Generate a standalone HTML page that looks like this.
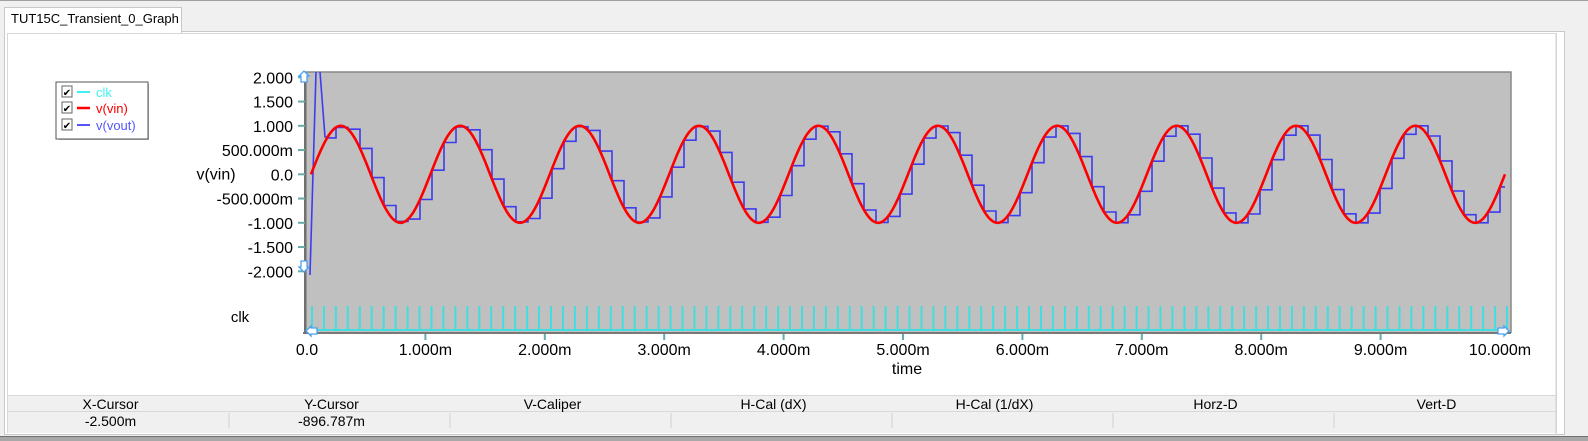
<!DOCTYPE html>
<html><head><meta charset="utf-8"><style>
html,body{margin:0;padding:0;width:1588px;height:441px;overflow:hidden;}
body{background:#f0f0f0;font-family:"Liberation Sans",sans-serif;}
#root{position:relative;width:1588px;height:441px;overflow:hidden;}
.t{position:absolute;font-size:13px;color:#000;}
svg{display:block}
</style></head><body><div id="root">
<div style="position:absolute;left:0;top:0;width:1588px;height:1px;background:#a0a0a0"></div>
<div style="position:absolute;left:4px;top:7px;width:176px;height:25px;background:#fff;border:1px solid #c8c8c8;border-bottom:none;z-index:2"></div>
<div class="t" style="left:11px;top:11px;font-size:13px;z-index:3">TUT15C_Transient_0_Graph</div>
<div style="position:absolute;left:4px;top:31px;width:1559px;height:402px;background:#fff;border:1px solid #c8c8c8;"></div>
<div style="position:absolute;left:7px;top:33px;width:1548px;height:398px;border:1px solid #d8d8d8;background:#fff"></div>
<div style="position:absolute;left:0;top:436px;width:1588px;height:5px;background:#a8a8a8"></div>
<div style="position:absolute;left:0;top:436px;width:1588px;height:1px;background:#707070"></div>
<div style="position:absolute;left:8px;top:395px;width:1548px;height:37px;background:#f0f0f0;border-top:1px solid #d8d8d8"></div>
<div style="position:absolute;left:8px;top:411px;width:1548px;height:1px;background:#d8d8d8"></div>
<svg width="1588" height="441" style="position:absolute;left:0;top:0" id="s">
</svg>
</div>
<script>
const NS="http://www.w3.org/2000/svg";const s=document.getElementById('s');
function el(t,a){const e=document.createElementNS(NS,t);for(const k in a)e.setAttribute(k,a[k]);s.appendChild(e);return e;}
function tx(x,y,str,anchor,fill,size){const e=el('text',{x:x,y:y,'text-anchor':anchor||'start',fill:fill||'#000','font-size':size||14,'font-family':'Liberation Sans, sans-serif'});e.textContent=str;}
el('rect',{x:306,y:72,width:1205,height:261,fill:'#c0c0c0'});
el('path',{d:'M306 333V72H1511V333',stroke:'#888',fill:'none','stroke-width':1.5});
el('path',{d:'M303 333H1511',stroke:'#777','stroke-width':2});
el('line',{x1:305,y1:72,x2:305,y2:334,stroke:'#707070','stroke-width':2});
const X0=311,PX=119.4,Y0=174.3,PY=48.5;
const X=t=>X0+t*PX, Y=v=>Y0-v*PY;
const yl=[[2,'2.000'],[1.5,'1.500'],[1,'1.000'],[0.5,'500.000m'],[0,'0.0'],[-0.5,'-500.000m'],[-1,'-1.000'],[-1.5,'-1.500'],[-2,'-2.000']];
yl.forEach(([v,l])=>{tx(293,Y(v)+6,l,'end','#000',16);el('line',{x1:298,y1:Y(v),x2:305,y2:Y(v),stroke:'#6aa','stroke-width':2});});
tx(216,Y(0)+5,'v(vin)','middle','#000',16);
tx(240,322,'clk','middle','#000',15);
for(let i=0;i<=10;i++){const l=i==0?'0.0':i+'.000m';tx(i==0?307:X(i)-5,355,l,'middle','#000',16);if(i>0&&i<10)el('line',{x1:X(i)-5,y1:334,x2:X(i)-5,y2:340,stroke:'#6aa','stroke-width':2});}
tx(907,374,'time','middle','#000',16);
let cp='M306 330H1506';for(let x=312;x<1508;x+=11.95)cp+=`M${x.toFixed(1)} 330V306`;
el('path',{d:cp,stroke:'#44dcdc','stroke-width':2,fill:'none'});
let d=`M310 275L316 72M320 72L325 137H326.7`;d+=`V${Y(0.75)}`;
for(let x=336;x<1505;x+=12){const v=Math.sin(2*Math.PI*(x-X0)/PX);d+=`H${x}V${Y(v).toFixed(1)}`;}
d+='H1505';
el('path',{d:d,stroke:'#3c3cf0','stroke-width':1.6,fill:'none'});
let p='';for(let x=X0;x<=1505;x+=1){const v=Math.sin(2*Math.PI*(x-X0)/PX);p+=(p?'L':'M')+x+' '+Y(v).toFixed(1);}
el('path',{d:p,stroke:'#f00','stroke-width':2.6,fill:'none'});
function arr(x,y,rot){el('path',{d:'M-3 -5H3V1H5L0 6L-5 1H-3Z',fill:'#fff',stroke:'#4aa0f0','stroke-width':1.3,transform:`translate(${x} ${y}) rotate(${rot})`});}
arr(304,77,180);arr(304,266,0);arr(312,331,90);arr(1503,331,-90);
el('rect',{x:59,y:84,width:90,height:56,fill:'#555',opacity:0.4});
el('rect',{x:56,y:82,width:92,height:57,fill:'#fff',stroke:'#555','stroke-width':1});
[['clk','#40f0f0',93],['v(vin)','#f00',109],['v(vout)','#55f',126]].forEach(([l,c,y])=>{
el('rect',{x:62,y:y-7,width:10,height:11,fill:'#fff',stroke:'#666'});
tx(67,y+3,'✔','middle','#000',10);
el('line',{x1:77,y1:y-1,x2:90,y2:y-1,stroke:c,'stroke-width':c=='#f00'?2.5:2});
tx(96,y+4,l,'start',c,13);});
const hd=['X-Cursor','Y-Cursor','V-Caliper','H-Cal (dX)','H-Cal (1/dX)','Horz-D','Vert-D'];
const vals=['-2.500m','-896.787m','','','','',''];
const W=221;
for(let i=0;i<7;i++){const cx=8+W*i+W/2-8;tx(cx,409,hd[i],'middle','#000',14);tx(cx,426,vals[i],'middle','#000',14);
if(i>0)el('line',{x1:8+W*i,y1:413,x2:8+W*i,y2:428,stroke:'#d0d0d0'});}
el('line',{x1:1556,y1:33,x2:1556,y2:434,stroke:'#d0d0d0'});
</script>
</body></html>
